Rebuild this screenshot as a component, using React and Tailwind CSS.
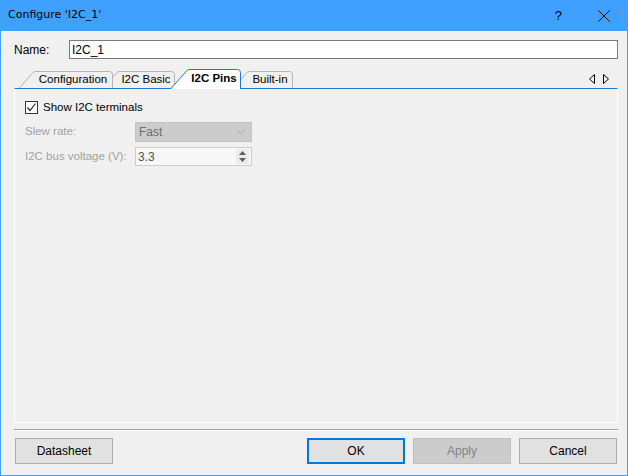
import React from "react";

const tabPath = (w, h, s, closed) => {
  const p = `M0.5 ${h} L${s} 1.5 Q${s + 1} 0.5 ${s + 3} 0.5 L${w - 3.5} 0.5 Q${w - 0.5} 0.5 ${w - 0.5} 3.5 L${w - 0.5} ${h}`;
  return closed ? p + " Z" : p;
};

const Tab = ({ label, w, h, s, selected, className }) => (
  <div className={`relative shrink-0 ${className}`} style={{ width: w, height: h }}>
    <svg width={w} height={h} className="absolute inset-0">
      <path d={tabPath(w, h, s, true)} fill={selected ? "#ffffff" : "#f0f0f0"} stroke="none" />
      <path d={tabPath(w, h, s, false)} fill="none" stroke={selected ? "#1e78d0" : "#b4b4b4"} strokeWidth="1" />
    </svg>
    <span
      className={`absolute inset-y-0 right-0 flex items-center justify-center text-[11.5px] text-black ${selected ? "font-bold" : ""}`}
      style={{ left: s }}
    >
      {label}
    </span>
  </div>
);

const Button = ({ children, variant }) => {
  const styles = {
    normal: "border border-[#adadad] bg-[#e1e1e1] text-black",
    focus: "border-2 border-[#0078d7] bg-[#e1e1e1] text-black",
    disabled: "border border-[#bfbfbf] bg-[#cccccc] text-[#838383]",
  };
  return (
    <div className={`flex h-[26px] w-[98px] items-center justify-center text-[12px] ${styles[variant]}`}>
      {children}
    </div>
  );
};

export default function App() {
  return (
    <div
      className="flex h-[476px] w-[628px] flex-col border-x border-b border-[#40a0ff] bg-[#f0f0f0] text-black"
      style={{ fontFamily: '"Liberation Sans", Arial, sans-serif' }}
    >
      {/* Title bar */}
      <div className="-mx-px flex h-[31px] shrink-0 items-center bg-[#40a0ff] pl-[8px]">
        <span className="text-[11px]" style={{ fontFamily: '"DejaVu Sans", sans-serif' }}>
          Configure 'I2C_1'
        </span>
        <span className="ml-auto mr-[36px] text-[13px]">?</span>
        <svg width="12" height="12" viewBox="0 0 12 12" className="mr-[18px]">
          <path d="M0.5 0.5 L11.5 11.5 M11.5 0.5 L0.5 11.5" stroke="#000" strokeWidth="1" />
        </svg>
      </div>

      <div className="flex flex-1 flex-col pl-[13px] pr-[9px]">
        {/* Name row */}
        <div className="mt-[9px] flex h-[19px] items-center">
          <span className="w-[55px] text-[12px]">Name:</span>
          <div className="flex h-[19px] flex-1 items-center border border-[#7a7a7a] bg-white pl-[2px] text-[12px]">
            I2C_1
          </div>
        </div>

        {/* Tab strip */}
        <div className="mt-[10px] flex h-[19px] items-end">
          <Tab label="Configuration" w={94} h={17} s={14} className="z-[4] ml-[5px]" />
          <Tab label="I2C Basic" w={72} h={17} s={14} className="z-[3] -ml-[10px]" />
          <Tab label="I2C Pins" w={71} h={20} s={17} selected className="z-[6] -mb-px -ml-[5px]" />
          <Tab label="Built-in" w={60} h={17} s={14} className="z-[2] -ml-[8px]" />
          <div className="ml-auto mb-[4px] mr-[9px] flex items-center gap-[8px]">
            <svg width="6" height="10" viewBox="0 0 6 10">
              <path d="M5.5 0.5 L0.5 5 L5.5 9.5 Z" fill="none" stroke="#000" />
            </svg>
            <svg width="6" height="10" viewBox="0 0 6 10">
              <path d="M0.5 0.5 L5.5 5 L0.5 9.5 Z" fill="none" stroke="#000" />
            </svg>
          </div>
        </div>

        {/* Panel */}
        <div className="relative z-[5] flex h-[335px] flex-col border-x border-b border-t border-white border-t-[#1e78d0] pl-[10px] pt-[12px] leading-none">
          <div className="flex h-[13px] items-center gap-[5px]">
            <div className="flex h-[13px] w-[13px] items-center justify-center border border-[#333333] bg-white">
              <svg width="11" height="11" viewBox="0 0 11 11">
                <path d="M1.5 5.5 L4 8.5 L9.5 1.5" fill="none" stroke="#222" strokeWidth="1.2" />
              </svg>
            </div>
            <span className="text-[11.5px]">Show I2C terminals</span>
          </div>

          <div className="mt-[8px] flex h-[20px] items-center">
            <span className="w-[110px] text-[11.5px] text-[#a0a0a0]">Slew rate:</span>
            <div className="flex h-[20px] w-[117px] items-center border border-[#c4c4c4] bg-[#cccccc] pl-[3px] text-[12px] text-[#6d6d6d]">
              Fast
              <svg width="9" height="6" viewBox="0 0 9 6" className="ml-auto mr-[6px]">
                <path d="M0.5 0.5 L4.5 4.5 L8.5 0.5" fill="none" stroke="#a8a8a8" />
              </svg>
            </div>
          </div>

          <div className="mt-[5px] flex h-[19px] items-center">
            <span className="w-[110px] text-[11.5px] text-[#a0a0a0]">I2C bus voltage (V):</span>
            <div className="flex h-[19px] w-[117px] items-center border border-[#cccccc] bg-[#f7f7f7] pl-[2px] text-[12px] text-[#555555]">
              3.3
              <div className="ml-auto mr-[2px] flex h-[15px] w-[13px] flex-col items-center justify-center gap-[3px] bg-[#ececec]">
                <svg width="7" height="4" viewBox="0 0 7 4">
                  <path d="M3.5 0 L7 4 L0 4 Z" fill="#606060" />
                </svg>
                <svg width="7" height="4" viewBox="0 0 7 4">
                  <path d="M0 0 L7 0 L3.5 4 Z" fill="#606060" />
                </svg>
              </div>
            </div>
          </div>
        </div>

        {/* Separator */}
        <div className="mt-[6px] h-[2px] border-t border-[#a0a0a0] border-b border-b-white" />

        {/* Buttons */}
        <div className="mt-[7px] flex items-center pl-px">
          <Button variant="normal">Datasheet</Button>
          <div className="ml-auto flex gap-[8px] pr-px">
            <Button variant="focus">OK</Button>
            <Button variant="disabled">Apply</Button>
            <Button variant="normal">Cancel</Button>
          </div>
        </div>
      </div>
    </div>
  );
}
